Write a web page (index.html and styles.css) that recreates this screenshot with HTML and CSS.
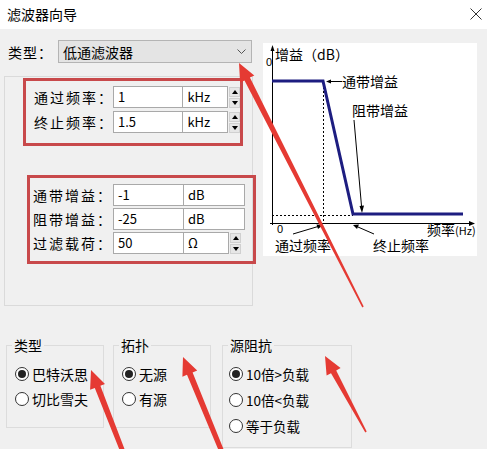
FILE: index.html
```html
<!DOCTYPE html>
<html lang="zh-CN">
<head>
  <meta charset="UTF-8" />
  <meta name="viewport" content="width=device-width, initial-scale=1.0"/>
  <title>滤波器向导</title>
  <link rel="stylesheet" href="styles.css">
</head>
<body>
<div class="window">

  <div class="titlebar">
    <span class="title">滤波器向导</span>
    <svg class="close" width="12" height="12" viewBox="0 0 12 12">
      <path d="M0.5 0.5 L11.5 11.5 M11.5 0.5 L0.5 11.5" stroke="#333" stroke-width="1" fill="none"/>
    </svg>
  </div>

  <div class="main">
    <div class="left">
      <div class="type-row">
        <span class="type-label">类型：</span>
        <div class="select">
          <span>低通滤波器</span>
          <svg width="9" height="6" viewBox="0 0 9 6"><path d="M0.5 0.5 L4.5 4.5 L8.5 0.5" stroke="#555" fill="none"/></svg>
        </div>
      </div>

      <div class="panel">
        <!-- frequency -->
        <div class="mark mark-freq">
          <div class="row">
            <span class="label">通过频率：</span>
            <span class="input">1</span>
            <span class="unit">kHz</span>
            <span class="spin"><i class="up"></i><i class="down"></i></span>
          </div>
          <div class="row">
            <span class="label">终止频率：</span>
            <span class="input">1.5</span>
            <span class="unit">kHz</span>
            <span class="spin"><i class="up"></i><i class="down"></i></span>
          </div>
        </div>

        <!-- gain / load -->
        <div class="mark mark-gain">
          <div class="row">
            <span class="label">通带增益：</span>
            <span class="input">-1</span>
            <span class="unit wide">dB</span>
          </div>
          <div class="row">
            <span class="label">阻带增益：</span>
            <span class="input">-25</span>
            <span class="unit wide">dB</span>
          </div>
          <div class="row">
            <span class="label">过滤载荷：</span>
            <span class="input">50</span>
            <span class="unit">Ω</span>
            <span class="spin"><i class="up"></i><i class="down"></i></span>
          </div>
        </div>
      </div>
    </div>

    <div class="chart">
      <svg width="214" height="213" viewBox="0 0 214 213">
        <g stroke="#000" stroke-width="1" fill="none">
          <line x1="9.5" y1="6" x2="9.5" y2="182"/>
          <line x1="7" y1="180.5" x2="207" y2="180.5"/>
          <line x1="60.5" y1="40" x2="60.5" y2="180" stroke-dasharray="2 2"/>
          <line x1="9" y1="172.5" x2="90" y2="172.5" stroke-dasharray="2 2"/>
          <line x1="79" y1="38.5" x2="66" y2="38.5"/>
          <line x1="91" y1="77" x2="98.5" y2="163"/>
          <line x1="30" y1="191" x2="55" y2="183.5"/>
          <line x1="111" y1="191" x2="95" y2="184"/>
        </g>
        <g fill="#000">
          <polygon points="9.5,2 7.5,8 11.5,8"/>
          <polygon points="212,180.5 206,178 206,183"/>
          <polygon points="63,38.5 68,36.5 68,40.5"/>
          <polygon points="99,170 96.5,163 101,162.5"/>
          <polygon points="60,182 53.5,181.5 55,186"/>
          <polygon points="90,182 94,186 96,181.5"/>
        </g>
        <polyline points="9,38 60,38 90,171 200,171" stroke="#1d1d80" stroke-width="3" fill="none"/>
        <g class="chart-text">
          <text x="12" y="17">增益（dB）</text>
          <text x="3" y="23" class="num">0</text>
          <text x="79" y="44">通带增益</text>
          <text x="89" y="73">阻带增益</text>
          <text x="14" y="189.5" class="num">0</text>
          <text x="164" y="192">频率<tspan class="small">(Hz)</tspan></text>
          <text x="12" y="208">通过频率</text>
          <text x="110" y="208">终止频率</text>
        </g>
      </svg>
    </div>
  </div>

  <div class="groups">
    <fieldset class="group g-type">
      <legend>类型</legend>
      <div class="radio"><span class="dot checked"></span>巴特沃思</div>
      <div class="radio"><span class="dot"></span>切比雪夫</div>
    </fieldset>
    <fieldset class="group g-topo">
      <legend>拓扑</legend>
      <div class="radio"><span class="dot checked"></span>无源</div>
      <div class="radio"><span class="dot"></span>有源</div>
    </fieldset>
    <fieldset class="group g-imp">
      <legend>源阻抗</legend>
      <div class="radio"><span class="dot checked"></span>10倍&gt;负载</div>
      <div class="radio"><span class="dot"></span>10倍&lt;负载</div>
      <div class="radio"><span class="dot"></span>等于负载</div>
    </fieldset>
  </div>

  <!-- red annotation arrows -->
  <svg class="arrows" width="487" height="449" viewBox="0 0 487 449">
    <g fill="#e53a33">
      <polygon points="239,63 254.3,75.4 249.9,77.6 363.7,306.6 362.3,307.4 244.5,80.4 240.1,82.6"/>
      <polygon points="91,370 105,383.9 100.4,385.7 125.3,451.1 120.7,452.9 94.8,387.9 90.1,389.7"/>
      <polygon points="183,357 197.2,370.6 192.6,372.6 224.3,451.1 219.7,453 187,374.8 182.4,376.7"/>
      <polygon points="325,356 340.6,368 336.2,370.4 366.7,431.6 365.3,432.4 331,373.2 326.6,375.6"/>
    </g>
  </svg>
</div>
</body>
</html>
```

FILE: styles.css
```css
* {
  box-sizing: border-box;
}

body {
  margin: 0;
  background: #f0f0f0;
  font-family: "Noto Sans CJK SC", "Noto Sans", sans-serif;
  font-size: 14px;
  color: #000;
}

.window {
  position: relative;
  width: 487px;
  height: 449px;
  overflow: hidden;
}

.titlebar {
  height: 29px;
  background: #fff;
  display: flex;
  align-items: center;
  justify-content: space-between;
  padding: 0 5px 1px 7px;
}

.title {
  font-size: 14px;
  line-height: 16px;
}

/* top area */
.main {
  display: flex;
  align-items: flex-start;
}

.left {
  width: 250px;
  margin-left: 4px;
  padding-top: 11px;
}

.type-row {
  display: flex;
  align-items: center;
  padding-left: 4px;
}

.type-label {
  width: 50px;
  letter-spacing: 1px;
  line-height: 16px;
}

.select {
  width: 194px;
  height: 23px;
  background: #e4e4e4;
  border: 1px solid #b4b4b4;
  display: flex;
  align-items: center;
  justify-content: space-between;
  padding: 0 5px 0 4px;
  line-height: 16px;
}

.panel {
  margin-top: 13px;
  width: 249px;
  height: 230px;
  border: 1px solid #dadada;
  padding-top: 1px;
}

.mark {
  border: 3px solid #c8494b;
}

.mark-freq {
  margin-left: 18px;
  width: 220px;
  height: 68px;
  padding: 5px 0 0 8px;
}

.mark-freq .label {
  width: 79px;
}

.mark-gain {
  margin: 29px 0 0 22px;
  width: 229px;
  height: 89px;
  padding: 6px 0 0 3px;
}

.mark-gain .label {
  width: 80px;
}

.row {
  display: flex;
  align-items: center;
  height: 22px;
  margin-bottom: 3px;
}

.mark-gain .row {
  margin-bottom: 2px;
}

.label {
  letter-spacing: 2px;
  line-height: 16px;
  white-space: nowrap;
}

.input,
.unit {
  height: 22px;
  background: #fff;
  border: 1px solid #a9a9a9;
  font-size: 13px;
  line-height: 20px;
  padding-left: 4px;
}

.input {
  width: 71px;
}

.unit {
  width: 46px;
  margin-left: -1px;
}

.unit.wide {
  width: 62px;
}

.spin {
  width: 11px;
  height: 21px;
  margin-left: 1px;
  display: flex;
  flex-direction: column;
  gap: 1px;
}

.spin i {
  flex: 1;
  background: #e6e6e6;
  border: 1px solid #d0d0d0;
  display: flex;
  align-items: center;
  justify-content: center;
}

.spin i::after {
  content: "";
  border-left: 3px solid transparent;
  border-right: 3px solid transparent;
}

.spin .up::after {
  border-bottom: 4px solid #000;
}

.spin .down::after {
  border-top: 4px solid #000;
}

.chart {
  margin: 14px 0 0 9px;
  width: 214px;
  height: 213px;
  background: #fff;
}

.chart svg {
  display: block;
}

.chart-text {
  font-family: "Noto Sans CJK SC", "Noto Sans", sans-serif;
  font-size: 14px;
  fill: #000;
}

.chart-text .small {
  font-size: 11px;
}

.chart-text .num {
  font-family: "Liberation Sans", sans-serif;
  font-size: 11px;
}

/* bottom groups */
.groups {
  display: flex;
  align-items: flex-start;
  margin-top: 30px;
  padding-left: 6px;
}

.group {
  margin: 0;
  border: 1px solid #dcdcdc;
  padding: 7px 4px 0 5px;
}

.group legend {
  padding: 0 2px;
  line-height: 18px;
}

.g-type {
  width: 98px;
  height: 92px;
}

.g-topo {
  width: 98px;
  height: 92px;
  margin-left: 9px;
}

.g-imp {
  width: 130px;
  height: 112px;
  margin-left: 11px;
}

.radio {
  display: flex;
  align-items: center;
  height: 25px;
  line-height: 16px;
  white-space: nowrap;
}

.g-imp .radio {
  height: 26px;
  font-size: 13.5px;
}

.dot {
  width: 14px;
  height: 14px;
  border: 1px solid #333;
  border-radius: 50%;
  background: #fff;
  margin: 0 3px 0 3px;
  display: flex;
  align-items: center;
  justify-content: center;
  flex: none;
}

.g-imp .dot {
  margin-left: 1px;
}

.dot.checked::after {
  content: "";
  width: 8px;
  height: 8px;
  border-radius: 50%;
  background: #222;
}

.arrows {
  position: absolute;
  top: 0;
  left: 0;
  pointer-events: none;
}
```
